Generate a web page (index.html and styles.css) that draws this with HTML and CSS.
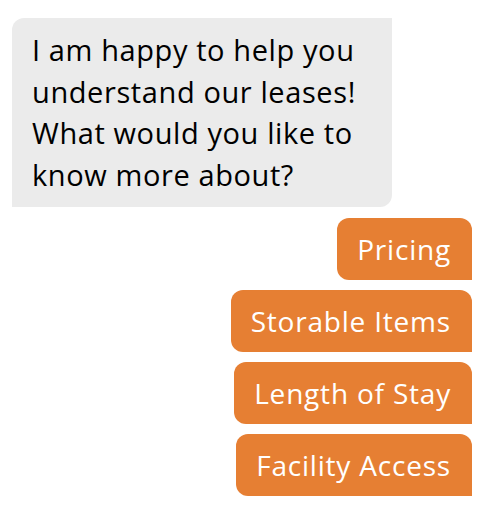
FILE: index.html
```html
<!DOCTYPE html>
<html>
<head>
    <meta charset="UTF-8">
    <link rel="stylesheet" href="styles.css">
</head>
<body>
    <div class="chat">
        <div class="bubble bot">
            I am happy to help you understand our leases! What would you like to know more about?
        </div>
        <div class="options">
            <button class="option">Pricing</button>
            <button class="option">Storable Items</button>
            <button class="option">Length of Stay</button>
            <button class="option">Facility Access</button>
        </div>
    </div>
</body>
</html>
```

FILE: styles.css
```css
body {
    margin: 0;
    background: #ffffff;
    font-family: "Open Sans", Arial, sans-serif;
}

.chat {
    display: flex;
    flex-direction: column;
    gap: 11px;
    padding: 18px 14px 12px 12px;
}

.bubble {
    box-sizing: border-box;
    width: 380px;
    padding: 11px 20px 12px 20px;
    background: #ebebeb;
    color: #000000;
    font-size: 29px;
    letter-spacing: 0.6px;
    line-height: 41.5px;
    border-radius: 12px 0 12px 0;
}

.options {
    display: flex;
    flex-direction: column;
    align-items: flex-end;
    gap: 10px;
}

.option {
    height: 62px;
    padding: 0 21px 0 20px;
    border: none;
    border-radius: 12px 12px 0 12px;
    background: #e67f33;
    color: #ffffff;
    font-family: inherit;
    font-size: 28px;
    letter-spacing: 0.8px;
    cursor: pointer;
}
```
